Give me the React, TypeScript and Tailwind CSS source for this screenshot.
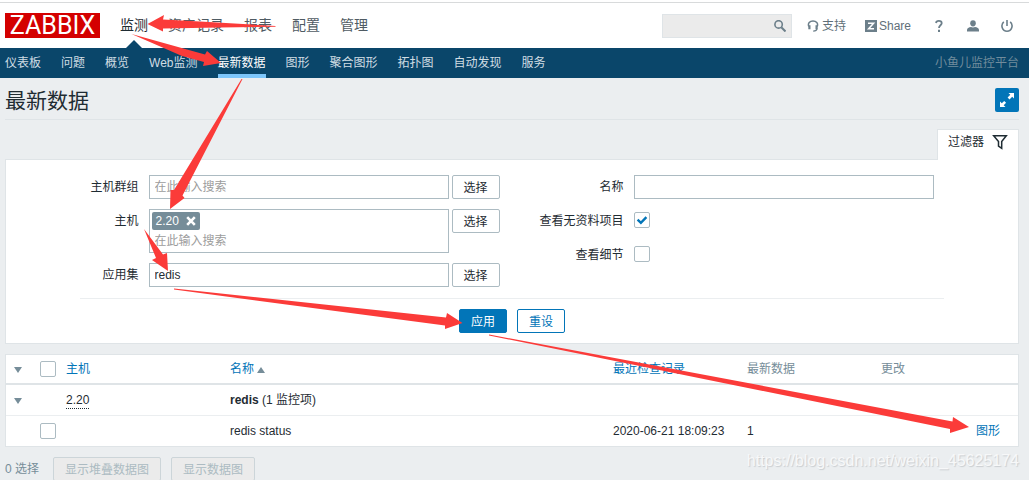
import type { InputHTMLAttributes } from "react";

const mainMenu = ["监测", "资产记录", "报表", "配置", "管理"];
const subMenu = ["仪表板", "问题", "概览", "Web监测", "最新数据", "图形", "聚合图形", "拓扑图", "自动发现", "服务"];

function Checkbox({ label, ...props }: InputHTMLAttributes<HTMLInputElement> & { label?: string }) {
  return (
    <span className="relative block size-4">
      <input
        type="checkbox"
        aria-label={label}
        className="peer block size-4 appearance-none rounded-[2px] border border-[#acbbc2] bg-white"
        {...props}
      />
      <svg
        viewBox="0 0 16 16"
        className="pointer-events-none absolute inset-0 hidden size-4 peer-checked:block"
        fill="none"
        stroke="#0275b8"
        strokeWidth="2.4"
      >
        <path d="M3.6 7.6 6.9 10.8 12.4 5.2" />
      </svg>
    </span>
  );
}

function SelectButton() {
  return (
    <button
      type="button"
      className="h-6 w-12 shrink-0 rounded-[2px] border border-[#acbbc2] bg-white pt-px text-[#1f2c33]"
    >
      选择
    </button>
  );
}

function Caret({ up = false }: { up?: boolean }) {
  return (
    <svg viewBox="0 0 8 6" className="inline-block h-[6px] w-2" fill="#768d99">
      <path d={up ? "M0 6 4 0 8 6z" : "M0 0h8L4 6z"} />
    </svg>
  );
}

function Header() {
  return (
    <header className="bg-white pt-[2px]">
      <div className="flex h-[46px] items-center border-t border-[#d8dadb] pr-4 pl-[5px]">
        <a
          href="#"
          className="flex h-[25px] w-[95px] items-center justify-center bg-[#d40000] font-[Roboto,sans-serif] text-[25px] leading-[25px] text-white"
        >
          ZABBIX
        </a>
        <nav className="ml-5 h-full">
          <ul className="flex h-full gap-5 text-sm">
            {mainMenu.map((item, i) => (
              <li key={item} className="relative flex items-center pb-[2px]">
                <a href="#" className={i === 0 ? "text-[#1f2c33]" : "text-[#4f5b63]"}>
                  {item}
                </a>
                {i === 0 && (
                  <svg viewBox="0 0 16 8" className="absolute bottom-0 left-1.5 h-2 w-4" fill="#0a466a">
                    <path d="M0 8 8 0l8 8z" />
                  </svg>
                )}
              </li>
            ))}
          </ul>
        </nav>

        <div className="ml-auto flex items-center text-[#5f6f79]">
          <form className="relative" role="search">
            <input
              type="text"
              aria-label="搜索"
              className="block h-6 w-[130px] border border-[#dfe4e7] bg-[#ebebeb] pr-7 pl-1"
            />
            <button type="button" aria-label="搜索" className="absolute top-1.5 right-1.5">
              <svg viewBox="0 0 12 12" className="size-3" fill="none" stroke="#6c7f8a">
                <circle cx="4.6" cy="4.4" r="3.7" strokeWidth="1.6" />
                <path d="m7.3 7.3 4.200 4.200" strokeWidth="2" />
              </svg>
            </button>
          </form>
          <a href="#" className="ml-[15px] flex items-center gap-[3px]">
            <svg viewBox="0 0 12 12" className="size-3" fill="none" stroke="#6c7f8a">
              <path d="M1.800 6.500C.5 3.400 2.800 1 6 1s5.500 2.400 4.200 5.500" strokeWidth="1.500" />
              <path d="M2.400 5.200v4M9.600 5.200v4" strokeWidth="2.200" />
              <path d="M10 8.800c-.2 1.800-1.300 2.400-3.800 2.400" strokeWidth="1.300" />
            </svg>
            支持
          </a>
          <a href="#" className="ml-[19px] flex items-center gap-[2px]">
            <svg viewBox="0 0 12 12" className="size-3">
              <path fill="#6c7f8a" d="M0 0h12v12H0z" />
              <path d="M3 3.200h5.600L3.600 8.800H9" fill="none" stroke="#fff" strokeWidth="1.500" />
            </svg>
            Share
          </a>
          <a href="#" aria-label="帮助" className="ml-6">
            <svg viewBox="0 0 8 12" className="h-3 w-2" fill="none" stroke="#6c7f8a" strokeWidth="1.800">
              <path d="M1 3C1.200 1.600 2.300.9 3.800.9 5.600.9 6.700 1.800 6.700 3.200c0 2-2.700 2.200-2.700 4.800" />
              <path d="M4 9.800V12" strokeWidth="2" />
            </svg>
          </a>
          <a href="#" aria-label="用户" className="ml-6">
            <svg viewBox="0 0 12 12" className="size-3" fill="#6c7f8a">
              <ellipse cx="6" cy="3.300" rx="2.800" ry="3.100" />
              <path d="M0 11.500V10c0-1.600 1.800-2.600 4-2.900.8.500 3.200.5 4 0 2.200.3 4 1.300 4 2.900v1.500z" />
            </svg>
          </a>
          <a href="#" aria-label="退出" className="ml-[22px]">
            <svg viewBox="0 0 12 12" className="size-3" fill="none" stroke="#6c7f8a" strokeWidth="1.600">
              <path d="M2.800 1.900C-.8 5 1.200 11.200 6 11.200s6.800-6.200 3.200-9.300M6 0v6" />
            </svg>
          </a>
        </div>
      </div>

      <nav className="flex h-[30px] items-stretch justify-between bg-[#0a466a] pr-[10px] pl-[5px]">
        <ul className="flex gap-5">
          {subMenu.map((item) => (
            <li key={item} className="flex">
              <a
                href="#"
                className={
                  item === "最新数据"
                    ? "border-b-4 border-[#7dc6fa] pt-[6px] text-white"
                    : "pt-[6px] text-[#d0dde4]"
                }
              >
                {item}
              </a>
            </li>
          ))}
        </ul>
        <span className="pt-[6px] text-[#718c9c]">小鱼儿监控平台</span>
      </nav>
    </header>
  );
}

function Filter() {
  const field = "border border-[#acbbc2] bg-white px-[5px] text-[#1f2c33] placeholder:text-[#9c9c9c]";
  return (
    <section>
      <div className="mt-[9px] flex justify-end">
        <button
          type="button"
          className="relative -mb-px flex h-[31px] items-center gap-2 border border-b-0 border-[#dfe4e7] bg-white px-[10px] pb-1.5 text-[#1f2c33]"
        >
          过滤器
          <svg viewBox="0 0 16 16" className="size-4" fill="none" stroke="#1f2c33" strokeWidth="1.500">
            <path d="M1.700 1.800h12.600L9.700 7.500v6.800L6.500 12V7.500z" />
          </svg>
        </button>
      </div>
      <form className="border border-[#dfe4e7] bg-white pt-[15px] pb-[10px]">
        <div className="mx-auto w-fit">
          <div className="flex gap-10 border-b border-[#ebeef0] px-[10px] pb-[11px]">
            <div className="grid grid-cols-[auto_auto] gap-[10px]">
              <label htmlFor="groups" className="pt-[3px] text-right">
                主机群组
              </label>
              <div className="flex gap-[3px]">
                <input id="groups" type="text" placeholder="在此输入搜索" className={`h-6 w-[300px] ${field}`} />
                <SelectButton />
              </div>

              <label htmlFor="hosts" className="pt-[3px] text-right">
                主机
              </label>
              <div className="flex gap-[3px]">
                <div className="w-[300px] border border-[#acbbc2] bg-white p-[2px]">
                  <span className="flex h-[18px] w-12 items-center justify-between rounded-[2px] bg-[#768d99] px-1 text-white">
                    2.20
                    <button type="button" aria-label="移除 2.20">
                      <svg viewBox="0 0 10 10" className="size-[10px]" stroke="#fff" strokeWidth="2.600">
                        <path d="m1.200 1.200 7.600 7.600M8.800 1.200 1.200 8.800" />
                      </svg>
                    </button>
                  </span>
                  <input
                    id="hosts"
                    type="text"
                    placeholder="在此输入搜索"
                    className="mt-[2px] block h-[18px] w-full px-[3px] placeholder:text-[#9c9c9c]"
                  />
                </div>
                <SelectButton />
              </div>

              <label htmlFor="application" className="pt-[3px] text-right">
                应用集
              </label>
              <div className="flex gap-[3px]">
                <input id="application" type="text" defaultValue="redis" className={`h-6 w-[300px] ${field}`} />
                <SelectButton />
              </div>
            </div>

            <div className="grid grid-cols-[auto_auto] content-start gap-[10px]">
              <label htmlFor="name" className="pt-[3px] text-right">
                名称
              </label>
              <input id="name" type="text" className={`h-6 w-[300px] ${field}`} />
              <label htmlFor="no-data" className="pt-[3px] text-right">
                查看无资料项目
              </label>
              <div className="flex h-6 items-center pb-[2px]">
                <Checkbox id="no-data" defaultChecked />
              </div>
              <label htmlFor="details" className="pt-[3px] text-right">
                查看细节
              </label>
              <div className="flex h-6 items-center pb-[2px]">
                <Checkbox id="details" />
              </div>
            </div>
          </div>
        </div>
        <div className="mt-[10px] flex justify-center gap-[10px]">
          <button type="button" className="h-6 w-12 rounded-[2px] border border-[#0275b8] bg-[#0275b8] pt-px text-white">
            应用
          </button>
          <button type="button" className="h-6 w-12 rounded-[2px] border border-[#0275b8] bg-white pt-px text-[#0275b8]">
            重设
          </button>
        </div>
      </form>
    </section>
  );
}

function DataTable() {
  return (
    <table className="mt-[10px] w-full table-fixed border-separate border-spacing-0 border border-[#dfe4e7] bg-white text-left [&_td]:px-[5px] [&_th]:px-[5px] [&_th]:font-normal">
      <colgroup>
        <col className="w-[29px]" />
        <col className="w-[26px]" />
        <col className="w-[164px]" />
        <col />
        <col className="w-[134px]" />
        <col className="w-[134px]" />
        <col className="w-[95px]" />
        <col className="w-[47px]" />
      </colgroup>
      <thead>
        <tr className="h-[30px] text-[#768d99] [&_th]:border-b-2 [&_th]:border-[#dfe4e7]">
          <th>
            <button type="button" aria-label="全部折叠" className="ml-[3px] block">
              <Caret />
            </button>
          </th>
          <th>
            <Checkbox label="全选" />
          </th>
          <th>
            <a href="#" className="text-[#0275b8]">
              主机
            </a>
          </th>
          <th>
            <a href="#" className="text-[#0275b8]">
              名称 <Caret up />
            </a>
          </th>
          <th>
            <a href="#" className="text-[#0275b8]">
              最近检查记录
            </a>
          </th>
          <th>最新数据</th>
          <th>更改</th>
          <th></th>
        </tr>
      </thead>
      <tbody>
        <tr className="h-[31px] [&_td]:border-b [&_td]:border-[#ebeef0]">
          <td>
            <button type="button" aria-label="折叠" className="ml-[3px] block">
              <Caret />
            </button>
          </td>
          <td></td>
          <td>
            <a href="#" className="inline-block border-b border-dotted border-[#1f2c33] leading-4">
              2.20
            </a>
          </td>
          <td colSpan={5}>
            <b>redis</b> (1 监控项)
          </td>
        </tr>
        <tr className="h-[30px]">
          <td></td>
          <td>
            <Checkbox label="redis status" />
          </td>
          <td></td>
          <td>redis status</td>
          <td className="whitespace-nowrap">2020-06-21 18:09:23</td>
          <td>1</td>
          <td></td>
          <td>
            <a href="#" className="text-[#0275b8]">
              图形
            </a>
          </td>
        </tr>
      </tbody>
    </table>
  );
}

/* Hand-drawn pointers showing the order of clicks */
function Arrows() {
  return (
    <svg
      width="1029"
      height="480"
      viewBox="0 0 1029 480"
      className="pointer-events-none absolute top-0 left-0 max-w-none"
      fill="#fb3b39"
    >
      <path d="M275.500 26 200 21.500 163 19.500 164 15 147.500 24 163 31.500V28.500L220 27.500 275.500 26.800z" />
      <path d="M131.500 34 187 49.500 205 54.500 207 51 221 63 203 66 204 62 182 56z" />
      <path d="M241.500 79 174 190 170.500 190 170 209 184.500 198 182.500 195.500 242.500 79z" />
      <path d="M144 229 156 258 152 260 168 271 167 253 163 254.500z" />
      <path d="M174 288.500 446 317.500 447 313 462.500 323 445 329V325.500L174 289.500z" />
      <path d="M489 334.500 952.500 421.500 953 417 969 427 950 433V429L489 335.500z" />
    </svg>
  );
}

export default function App() {
  return (
    <div className="relative flow-root min-h-screen bg-[#ebeef0] font-['Liberation_Sans','Noto_Sans_CJK_SC',sans-serif] text-xs leading-[18px] text-[#1f2c33]">
      <Header />
      <main className="pr-[10px] pl-[5px]">
        <div className="flex h-[42px] items-center justify-between border-b border-[#dfe4e7]">
          <h1 className="pt-1 text-[21px] leading-6">最新数据</h1>
          <button
            type="button"
            aria-label="全屏"
            className="mt-[3px] flex size-6 items-center justify-center rounded-[2px] bg-[#0275b8]"
          >
            <svg viewBox="0 0 14 14" className="size-[14px]" fill="#fff">
              <path d="M8.500 0H14v5.500l-1.800-1.800-2.700 2.700-1.900-1.900 2.700-2.700zM0 8.500l1.800 1.800L4.200 7.900l1.900 1.900-2.400 2.400L5.500 14H0z" />
            </svg>
          </button>
        </div>
        <Filter />
        <DataTable />
        <div className="mt-[10px] flex items-center text-[#768d99]">
          <span className="mr-[14px]">0 选择</span>
          <div className="flex gap-[10px]">
            <button
              type="button"
              disabled
              className="h-6 rounded-[2px] border border-[#ccd5d9] bg-[#ebebeb] px-[11px] pt-px text-[#acbbc2]"
            >
              显示堆叠数据图
            </button>
            <button
              type="button"
              disabled
              className="h-6 rounded-[2px] border border-[#ccd5d9] bg-[#ebebeb] px-[11px] pt-px text-[#acbbc2]"
            >
              显示数据图
            </button>
          </div>
        </div>
      </main>
      <Arrows />
      <p className="pointer-events-none absolute right-[10px] bottom-2 text-base leading-6 text-[#f7f8f9] [text-shadow:1px_1px_1px_#c9cdd0]">
        https://blog.csdn.net/weixin_45625174
      </p>
    </div>
  );
}
